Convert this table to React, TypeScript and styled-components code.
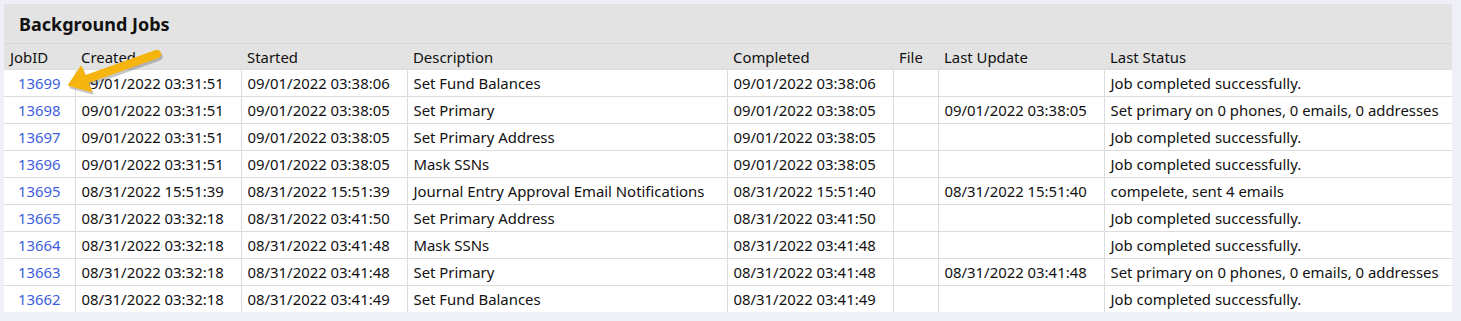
import styled, { createGlobalStyle } from 'styled-components';

const GlobalStyle = createGlobalStyle`
  body {
    margin: 0;
    background: #eff0f7;
    font-family: 'Noto Sans', 'Open Sans', sans-serif;
  }
`;

type Job = {
  id: number;
  created: string;
  started: string;
  description: string;
  completed: string;
  file: string;
  lastUpdate: string;
  lastStatus: string;
};

const jobs: Job[] = [
  { id: 13699, created: '09/01/2022 03:31:51', started: '09/01/2022 03:38:06', description: 'Set Fund Balances', completed: '09/01/2022 03:38:06', file: '', lastUpdate: '', lastStatus: 'Job completed successfully.' },
  { id: 13698, created: '09/01/2022 03:31:51', started: '09/01/2022 03:38:05', description: 'Set Primary', completed: '09/01/2022 03:38:05', file: '', lastUpdate: '09/01/2022 03:38:05', lastStatus: 'Set primary on 0 phones, 0 emails, 0 addresses' },
  { id: 13697, created: '09/01/2022 03:31:51', started: '09/01/2022 03:38:05', description: 'Set Primary Address', completed: '09/01/2022 03:38:05', file: '', lastUpdate: '', lastStatus: 'Job completed successfully.' },
  { id: 13696, created: '09/01/2022 03:31:51', started: '09/01/2022 03:38:05', description: 'Mask SSNs', completed: '09/01/2022 03:38:05', file: '', lastUpdate: '', lastStatus: 'Job completed successfully.' },
  { id: 13695, created: '08/31/2022 15:51:39', started: '08/31/2022 15:51:39', description: 'Journal Entry Approval Email Notifications', completed: '08/31/2022 15:51:40', file: '', lastUpdate: '08/31/2022 15:51:40', lastStatus: 'compelete, sent 4 emails' },
  { id: 13665, created: '08/31/2022 03:32:18', started: '08/31/2022 03:41:50', description: 'Set Primary Address', completed: '08/31/2022 03:41:50', file: '', lastUpdate: '', lastStatus: 'Job completed successfully.' },
  { id: 13664, created: '08/31/2022 03:32:18', started: '08/31/2022 03:41:48', description: 'Mask SSNs', completed: '08/31/2022 03:41:48', file: '', lastUpdate: '', lastStatus: 'Job completed successfully.' },
  { id: 13663, created: '08/31/2022 03:32:18', started: '08/31/2022 03:41:48', description: 'Set Primary', completed: '08/31/2022 03:41:48', file: '', lastUpdate: '08/31/2022 03:41:48', lastStatus: 'Set primary on 0 phones, 0 emails, 0 addresses' },
  { id: 13662, created: '08/31/2022 03:32:18', started: '08/31/2022 03:41:49', description: 'Set Fund Balances', completed: '08/31/2022 03:41:49', file: '', lastUpdate: '', lastStatus: 'Job completed successfully.' },
];

const columns = [
  { label: 'JobID', width: 71 },
  { label: 'Created', width: 166 },
  { label: 'Started', width: 166 },
  { label: 'Description', width: 320 },
  { label: 'Completed', width: 166 },
  { label: 'File', width: 45 },
  { label: 'Last Update', width: 166 },
  { label: 'Last Status', width: 348 },
];

const Page = styled.div`
  padding: 4px 9px 8px 4px;
`;

const Panel = styled.section`
  position: relative;
  width: 1448px;
  background: #e3e3e3;
`;

const Title = styled.h2`
  margin: 0;
  height: 39px;
  padding: 0 15px;
  display: flex;
  align-items: center;
  font-size: 18px;
  font-weight: 700;
  color: #111;
  border-bottom: 1px solid #d6d6d6;
`;

const Table = styled.table`
  width: 1448px;
  table-layout: fixed;
  border-collapse: collapse;
  font-size: 14.9px;
  color: #111;
`;

const HeadCell = styled.th`
  height: 25px;
  padding: 0 6px;
  text-align: left;
  font-weight: 400;
  white-space: nowrap;
`;

const Row = styled.tr`
  background: #fff;
`;

const Cell = styled.td<{ $center?: boolean }>`
  height: 26px;
  padding: 0 6px;
  border-top: 1px solid #dcdcdc;
  border-left: 1px solid #dcdcdc;
  text-align: ${({ $center }) => ($center ? 'center' : 'left')};
  white-space: nowrap;
  line-height: 20px;

  &:first-child {
    border-left: none;
  }
`;

const JobLink = styled.a`
  color: #3d5ee0;
  text-decoration: none;
`;

const Pointer = styled.svg`
  position: absolute;
  left: 0;
  top: 0;
  pointer-events: none;
`;

// the callout arrow drawn over the first row, pointing at its job id
const shaft = { x1: 153, y1: 50, x2: 83, y2: 75 };
const head = '65,81 87,87 77,63';

const Arrow = () => (
  <Pointer width="170" height="100" viewBox="0 0 170 100">
    <g transform="translate(1.5 2.5)" opacity="0.3">
      <line {...shaft} stroke="#444" strokeWidth="8.5" strokeLinecap="round" />
      <polygon points={head} fill="#444" stroke="#444" strokeWidth="2" strokeLinejoin="round" />
    </g>
    <line {...shaft} stroke="#f6b50e" strokeWidth="8.5" strokeLinecap="round" />
    <polygon points={head} fill="#f6b50e" stroke="#f6b50e" strokeWidth="2" strokeLinejoin="round" />
  </Pointer>
);

export default function App() {
  return (
    <Page>
      <GlobalStyle />
      <Panel>
        <Title>Background Jobs</Title>
        <Table>
          <colgroup>
            {columns.map((c) => (
              <col key={c.label} style={{ width: c.width }} />
            ))}
          </colgroup>
          <thead>
            <tr>
              {columns.map((c) => (
                <HeadCell key={c.label}>{c.label}</HeadCell>
              ))}
            </tr>
          </thead>
          <tbody>
            {jobs.map((job) => (
              <Row key={job.id}>
                <Cell $center>
                  <JobLink href="#">{job.id}</JobLink>
                </Cell>
                <Cell>{job.created}</Cell>
                <Cell>{job.started}</Cell>
                <Cell>{job.description}</Cell>
                <Cell>{job.completed}</Cell>
                <Cell>{job.file}</Cell>
                <Cell>{job.lastUpdate}</Cell>
                <Cell>{job.lastStatus}</Cell>
              </Row>
            ))}
          </tbody>
        </Table>
        <Arrow />
      </Panel>
    </Page>
  );
}
